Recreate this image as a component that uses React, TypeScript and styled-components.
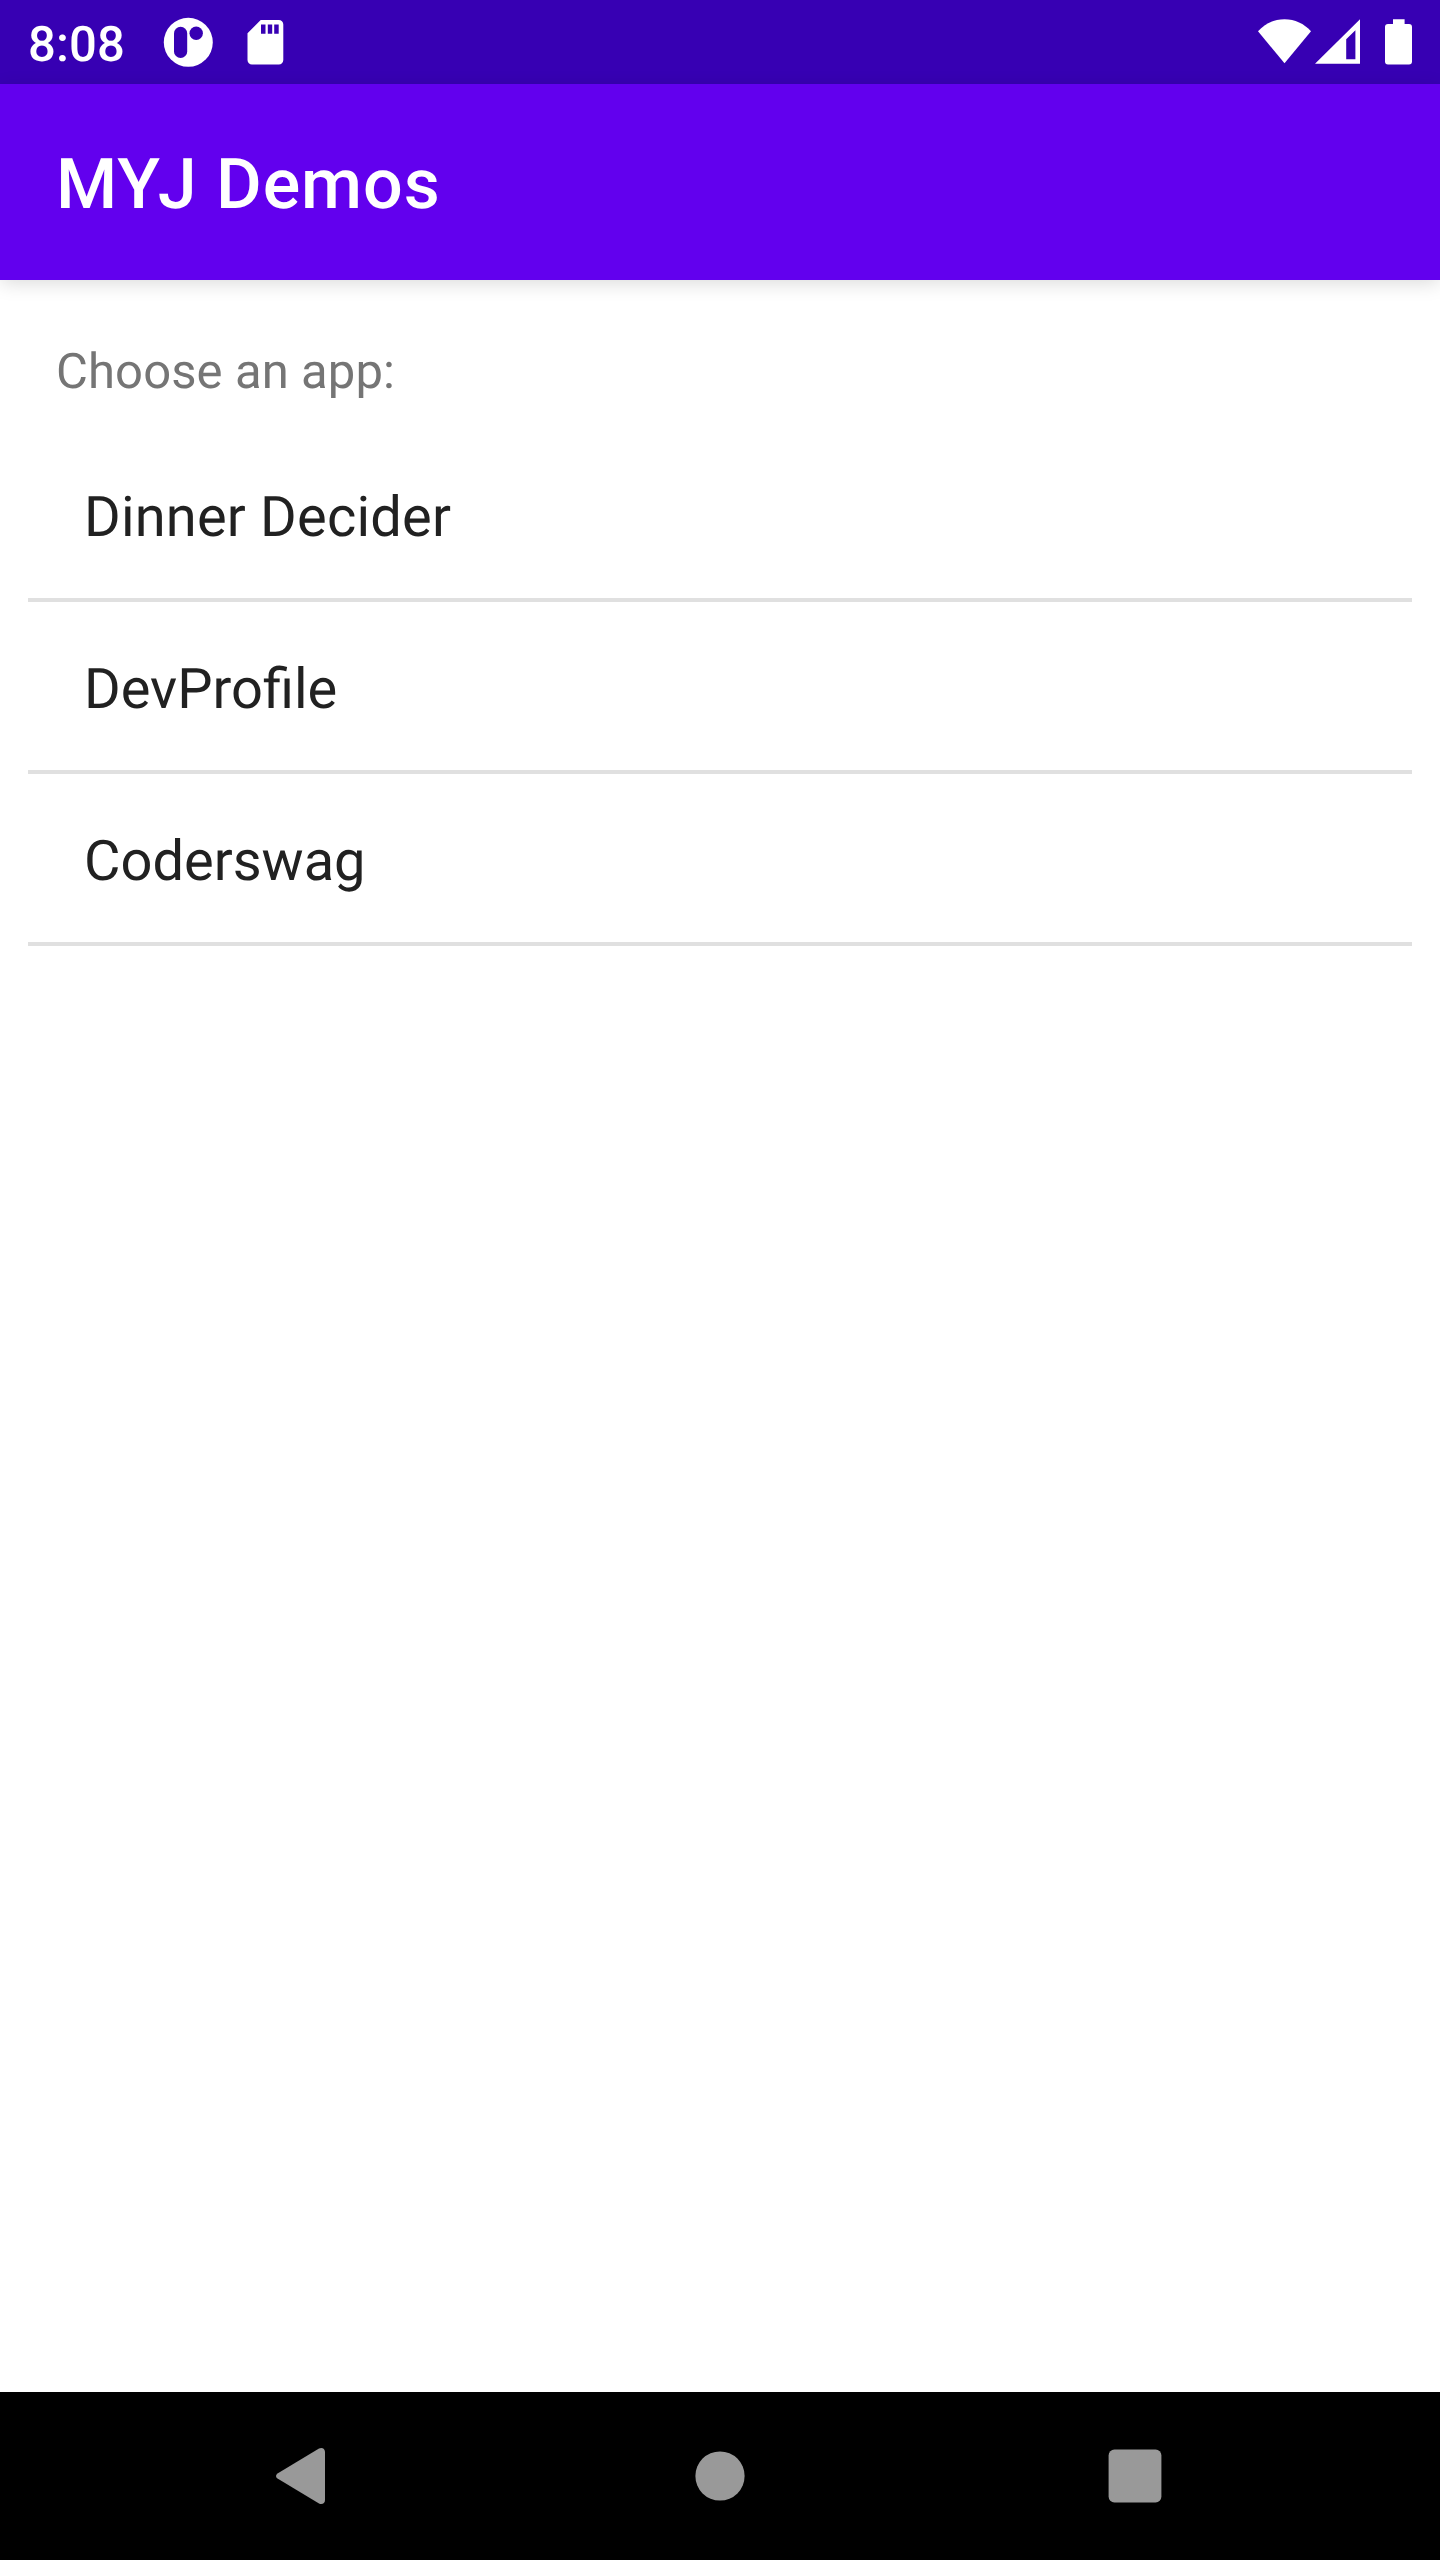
import React from "react";
import styled, { createGlobalStyle } from "styled-components";

const GlobalStyle = createGlobalStyle`
  body {
    margin: 0;
    background: #ffffff;
    font-family: Roboto, "Noto Sans", sans-serif;
    text-rendering: geometricPrecision;
  }
`;

const Screen = styled.div`
  display: flex;
  flex-direction: column;
  width: 1440px;
  height: 2560px;
  overflow: hidden;
  background: #ffffff;
`;

const StatusBar = styled.header`
  display: flex;
  align-items: center;
  flex: none;
  height: 84px;
  padding: 0 28px;
  box-sizing: border-box;
  background: #3700b3;
`;

const Clock = styled.time`
  width: 134px;
  padding-top: 6px;
  color: #ffffff;
  font-size: 49px;
  font-weight: 500;
  line-height: 58px;
  letter-spacing: 0.15px;
`;

const StatusIcons = styled.div<{ $end?: boolean }>`
  display: flex;
  gap: ${(p) => (p.$end ? "0" : "28px")};
  margin-left: ${(p) => (p.$end ? "auto" : "0")};
`;

const Icon = styled.svg`
  display: block;
  flex: none;
`;

const AppBar = styled.div`
  display: flex;
  align-items: center;
  flex: none;
  height: 196px;
  padding: 0 56px;
  box-sizing: border-box;
  background: #6200ee;
  box-shadow: 0 4px 18px -1px rgba(0, 0, 0, 0.15);
`;

const Title = styled.h1`
  margin: 6px 0 0;
  color: #ffffff;
  font-size: 70px;
  font-weight: 500;
  line-height: 82px;
  letter-spacing: 0.014em;
`;

const Content = styled.main`
  display: flex;
  flex-direction: column;
  flex: 1;
  padding: 56px 28px 0;
`;

const Prompt = styled.p`
  margin: 0 28px 28px;
  padding-top: 6px;
  height: 60px;
  color: #757575;
  font-size: 49px;
  line-height: 60px;
  letter-spacing: 0.1px;
`;

const AppList = styled.ul`
  margin: 0;
  padding: 0;
  list-style: none;
`;

const AppRow = styled.li<{ $tracking: string }>`
  display: flex;
  align-items: center;
  height: 172px;
  padding: 6px 56px 0;
  box-sizing: border-box;
  border-bottom: 4px solid #e0e0e0;
  color: #212121;
  font-size: 56px;
  line-height: 66px;
  letter-spacing: ${(p) => p.$tracking};
`;

const NavBar = styled.nav`
  display: flex;
  align-items: center;
  justify-content: center;
  gap: 331px;
  flex: none;
  height: 168px;
  background: #000000;
`;

const NavButton = styled.button`
  display: block;
  width: 84px;
  height: 84px;
  padding: 0;
  border: 0;
  background: none;
`;

const apps = [
  { name: "Dinner Decider", tracking: "0.19px" },
  { name: "DevProfile", tracking: "normal" },
  { name: "Coderswag", tracking: "normal" },
];

export default function App() {
  return (
    <>
      <GlobalStyle />
      <Screen>
        <StatusBar>
          <Clock>8:08</Clock>
          <StatusIcons>
            <Icon width="52" height="84" viewBox="162 0 52 84">
              <circle cx="188.3" cy="42.3" r="24.5" fill="#fff" />
              <rect x="174" y="26.8" width="13.2" height="31.2" rx="6.6" fill="#3700b3" />
              <circle cx="196.2" cy="33.3" r="6.7" fill="#3700b3" />
            </Icon>
            <Icon width="44" height="84" viewBox="242 0 44 84">
              <path
                fill="#fff"
                fillRule="evenodd"
                d="M260.7 20h18.1a4.5 4.5 0 0 1 4.5 4.5V60a4.5 4.5 0 0 1-4.5 4.5h-26.8a4.5 4.5 0 0 1-4.5-4.5V33.2zM261 24.5v9.3h4.5v-9.3zM267.8 24.5v9.3h4.4v-9.3zM274.2 24.5v9.3h4.5v-9.3z"
              />
            </Icon>
          </StatusIcons>
          <StatusIcons $end>
            <Icon width="56" height="84" viewBox="1256 0 56 84">
              <path fill="#fff" d="M1284.5 63.3L1258 31.3C1265 23.5 1274 19.2 1284.5 19.2S1304 23.5 1311 31.3z" />
            </Icon>
            <Icon width="50" height="84" viewBox="1312 0 50 84">
              <path
                fill="#fff"
                fillRule="evenodd"
                d="M1315 63.7L1360 19.3V63.7zM1346.2 39.2V59.2H1355.4V30.2z"
              />
            </Icon>
            <Icon width="50" height="84" viewBox="1362 0 50 84">
              <path
                fill="#fff"
                d="M1393 19.2h11.6V24H1409a3 3 0 0 1 3 3v34.6a3 3 0 0 1-3 3h-21a3 3 0 0 1-3-3V27a3 3 0 0 1 3-3h5z"
              />
            </Icon>
          </StatusIcons>
        </StatusBar>
        <AppBar>
          <Title>MYJ Demos</Title>
        </AppBar>
        <Content>
          <Prompt>Choose an app:</Prompt>
          <AppList>
            {apps.map(({ name, tracking }) => (
              <AppRow key={name} $tracking={tracking}>
                {name}
              </AppRow>
            ))}
          </AppList>
        </Content>
        <NavBar>
          <NavButton aria-label="Back">
            <Icon width="84" height="84" viewBox="263 2434 84 84">
              <path
                fill="#999"
                d="M277.5 2473.4L319 2448.5C322 2446.9 325 2448.7 325 2452V2500C325 2503.3 322 2505.1 319 2503.5L277.5 2478.6C275.5 2477.2 275.5 2474.8 277.5 2473.4z"
              />
            </Icon>
          </NavButton>
          <NavButton aria-label="Home">
            <Icon width="84" height="84" viewBox="678 2434 84 84">
              <circle cx="720" cy="2476" r="24.6" fill="#999" />
            </Icon>
          </NavButton>
          <NavButton aria-label="Overview">
            <Icon width="84" height="84" viewBox="1093 2434 84 84">
              <rect x="1108.6" y="2449.6" width="52.8" height="52.8" rx="5.8" fill="#999" />
            </Icon>
          </NavButton>
        </NavBar>
      </Screen>
    </>
  );
}
